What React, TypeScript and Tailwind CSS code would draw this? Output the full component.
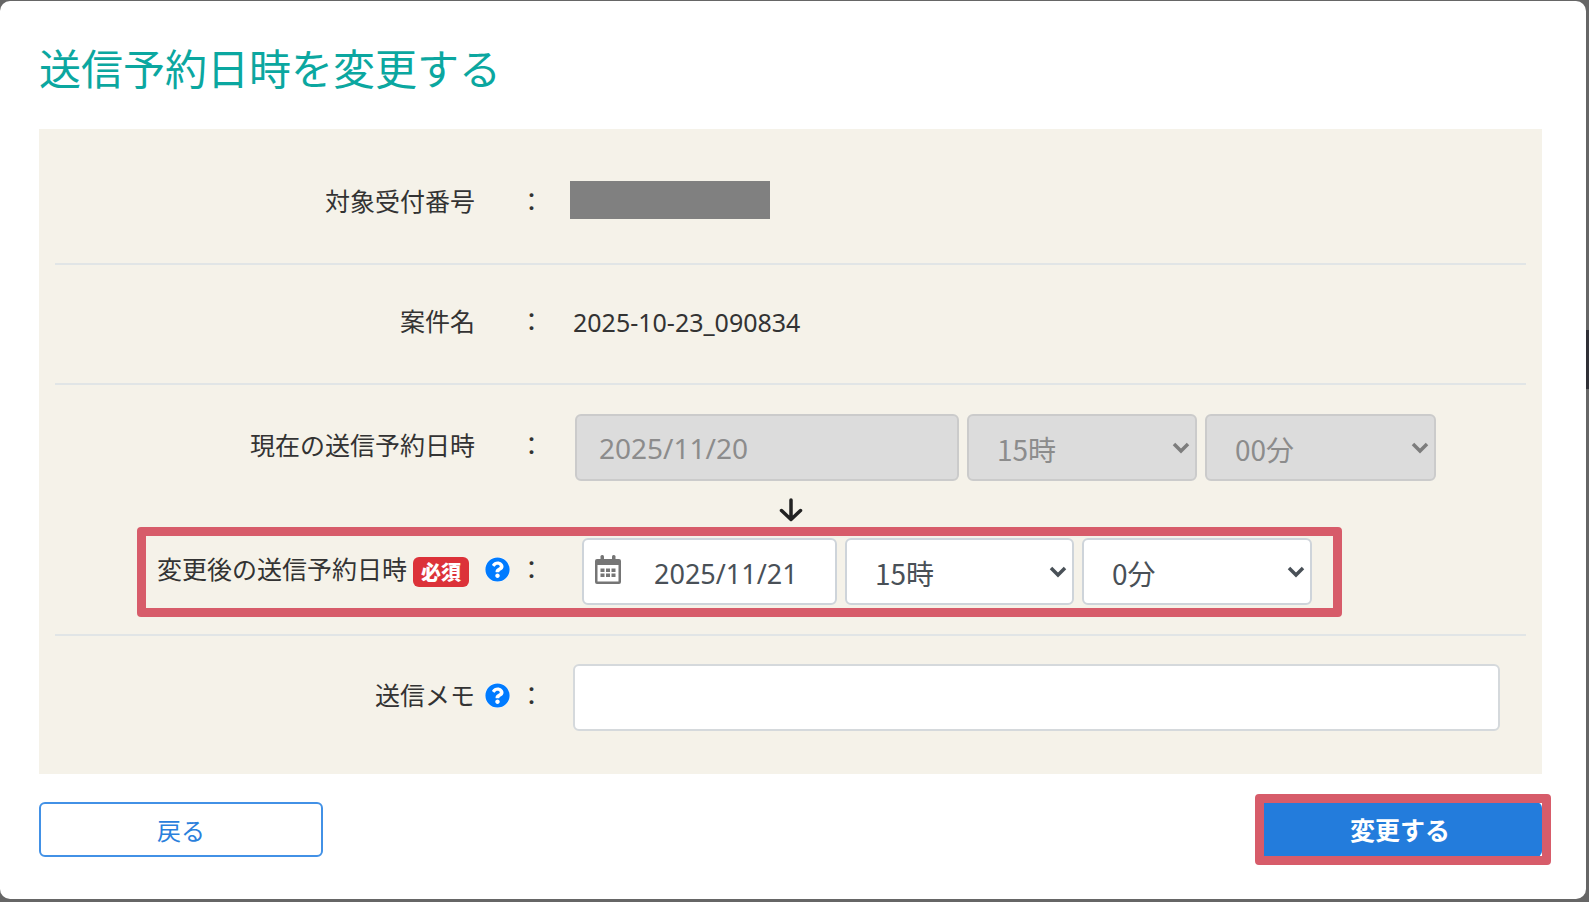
import { useState } from 'react';
import type { ReactNode, SelectHTMLAttributes } from 'react';
import { FaQuestionCircle } from 'react-icons/fa';

const hours = Array.from({ length: 24 }, (_, i) => `${i}時`);
const minutes = ['0分', '10分', '20分', '30分', '40分', '50分'];

function CalendarIcon() {
  return (
    <svg viewBox="0 0 26 29" className="h-[29px] w-[26px]" fill="#757575" aria-hidden="true">
      <rect x="5.5" y="0" width="3.5" height="7" rx="1.5" />
      <rect x="17" y="0" width="3.5" height="7" rx="1.5" />
      <path
        fillRule="evenodd"
        d="M2 4h22a2 2 0 0 1 2 2v21a2 2 0 0 1-2 2H2a2 2 0 0 1-2-2V6a2 2 0 0 1 2-2zM2.500 10v16.500h21V10z"
      />
      <path d="M5.500 13.500h4v3.500h-4zM11 13.500h4v3.500h-4zM16.500 13.500h4v3.500h-4zM5.500 18.500h4V22h-4zM11 18.500h4V22h-4zM16.500 18.500h4V22h-4z" />
    </svg>
  );
}

function ArrowDownIcon() {
  return (
    <svg
      viewBox="0 0 24 24"
      className="h-6 w-6"
      fill="none"
      stroke="#222"
      strokeWidth="3.5"
      strokeLinecap="round"
      aria-hidden="true"
    >
      <path d="M12 2v19M2.500 12.500L12 21.500l9.500-9" strokeLinejoin="round" />
    </svg>
  );
}

function Help({ label }: { label: string }) {
  return (
    <button type="button" aria-label={label} className="rounded-full bg-white text-[#007bff]">
      <FaQuestionCircle className="h-[25px] w-[25px]" />
    </button>
  );
}

function Select({
  options,
  ...props
}: { options: string[] } & SelectHTMLAttributes<HTMLSelectElement>) {
  return (
    <div className="relative">
      <select
        {...props}
        className="h-[67px] w-full appearance-none rounded-md border-2 border-[#ced4da] bg-white pt-0.5 pl-7 text-[28px] text-[#495057] disabled:border-[#cbcbcb] disabled:bg-[#dcdcdc] disabled:text-[#8c8c8c] disabled:opacity-100"
      >
        {options.map((option) => (
          <option key={option}>{option}</option>
        ))}
      </select>
      <svg
        viewBox="0 0 18 12"
        className={`pointer-events-none absolute top-7 right-[7px] h-3 w-[18px] ${props.disabled ? 'text-[#7d7d7d]' : 'text-[#495057]'}`}
        fill="none"
        stroke="currentColor"
        strokeWidth="3.5"
        aria-hidden="true"
      >
        <path d="M2 2l7 7 7-7" />
      </svg>
    </div>
  );
}

function Field({
  label,
  htmlFor,
  badge,
  help,
  children,
}: {
  label: string;
  htmlFor?: string;
  badge?: ReactNode;
  help?: ReactNode;
  children: ReactNode;
}) {
  return (
    <div className="grid grid-cols-[420px_44px_26px_1fr] items-center text-[25px] leading-10 text-[#333]">
      <div className="flex items-center justify-end pb-2 whitespace-nowrap">
        {htmlFor ? <label htmlFor={htmlFor}>{label}</label> : <span>{label}</span>}
        {badge}
      </div>
      <div className="flex justify-center pb-1">{help}</div>
      <div className="pb-2">：</div>
      <div className="pl-7">{children}</div>
    </div>
  );
}

export default function App() {
  const [date, setDate] = useState('2025/11/21');
  const [hour, setHour] = useState('15時');
  const [minute, setMinute] = useState('0分');
  const [memo, setMemo] = useState('');

  return (
    <div className="relative min-h-screen bg-[#666] pt-px pr-[3px] pb-0.5 font-['Noto_Sans_CJK_JP',sans-serif]">
      {/* Page behind the dialog */}
      <div className="absolute top-[330px] right-0 h-[59px] w-[3px] bg-[#303036]" />

      <div
        role="dialog"
        aria-labelledby="dialog-title"
        className="relative rounded-[10px] bg-white pt-9 pr-11 pb-[42px] pl-[39px]"
      >
        <h1 id="dialog-title" className="mb-8 text-[42px] leading-[60px] text-[#0ba7a0]">
          送信予約日時を変更する
        </h1>

        <div className="divide-y-2 divide-[#e1e5e6] bg-[#f5f2e9] px-4 pt-4 pb-3.5">
          <div className="flex h-[120px] flex-col justify-center">
            <Field label="対象受付番号">
              <div className="mb-2 -ml-[3px] h-[38px] w-[200px] bg-[#808080]" />
            </Field>
          </div>

          <div className="flex h-[120px] flex-col justify-center">
            <Field label="案件名">
              <p className="pb-1 font-['Noto_Sans',sans-serif]">2025-10-23_090834</p>
            </Field>
          </div>

          {/* Current and new schedule */}
          <div className="py-[29px]">
            <Field label="現在の送信予約日時" htmlFor="current-date">
              <div className="mr-[90px] ml-0.5 grid grid-cols-[384fr_230fr_231fr] gap-2">
                <input
                  id="current-date"
                  type="text"
                  disabled
                  value="2025/11/20"
                  className="h-[67px] w-full min-w-0 rounded-md border-2 border-[#cbcbcb] bg-[#dcdcdc] px-[22px] font-['Noto_Sans',sans-serif] text-[28px] text-[#8c8c8c]"
                />
                <Select aria-label="現在の時" options={['15時']} disabled />
                <Select aria-label="現在の分" options={['00分']} disabled />
              </div>
            </Field>

            <div className="flex h-[57px] items-center pl-[724px]">
              <ArrowDownIcon />
            </div>

            <div className="relative">
              <Field
                label="変更後の送信予約日時"
                htmlFor="new-date"
                badge={
                  <span className="mt-2 mr-1.5 ml-1.5 rounded-md bg-[#dc3239] px-2 text-[20px] leading-[30px] font-black text-white">
                    必須
                  </span>
                }
                help={<Help label="送信予約日時について" />}
              >
                <div className="mr-[214px] ml-[9px] grid grid-cols-[255fr_229fr_230fr] gap-2">
                  <div className="relative">
                    <input
                      id="new-date"
                      type="text"
                      value={date}
                      onChange={(e) => setDate(e.target.value)}
                      className="h-[67px] w-full min-w-0 rounded-md border-2 border-[#ced4da] bg-white pt-1 pl-[70px] font-['Noto_Sans',sans-serif] text-[27px] text-[#495057]"
                    />
                    <div className="pointer-events-none absolute top-[17px] left-[13px]">
                      <CalendarIcon />
                    </div>
                  </div>
                  <Select
                    aria-label="変更後の時"
                    options={hours}
                    value={hour}
                    onChange={(e) => setHour(e.target.value)}
                  />
                  <Select
                    aria-label="変更後の分"
                    options={minutes}
                    value={minute}
                    onChange={(e) => setMinute(e.target.value)}
                  />
                </div>
              </Field>
              <div className="pointer-events-none absolute -top-[11px] right-[184px] -bottom-3 left-[82px] rounded-[4px] border-[9px] border-[#d75c6a]" />
            </div>
          </div>

          <div className="pt-7 pb-[29px]">
            <Field label="送信メモ" htmlFor="memo" help={<Help label="送信メモについて" />}>
              <div className="mr-[26px]">
                <input
                  id="memo"
                  type="text"
                  value={memo}
                  onChange={(e) => setMemo(e.target.value)}
                  className="block h-[67px] w-full rounded-md border-2 border-[#d5d9dc] bg-white px-6"
                />
              </div>
            </Field>
          </div>
        </div>

        <div className="flex justify-between pt-7">
          <button
            type="button"
            className="h-[55px] w-[284px] rounded-md border-2 border-[#4291e6] bg-white text-2xl text-[#2a80dc]"
          >
            戻る
          </button>
          <div className="relative">
            <button
              type="button"
              className="h-[55px] w-[284px] rounded-md bg-[#237cdc] text-[25px] font-bold text-white"
            >
              変更する
            </button>
            <div className="pointer-events-none absolute -top-2 -right-[9px] -bottom-2 -left-[3px] rounded-[4px] border-[9px] border-[#d75c6a]" />
          </div>
        </div>
      </div>
    </div>
  );
}
